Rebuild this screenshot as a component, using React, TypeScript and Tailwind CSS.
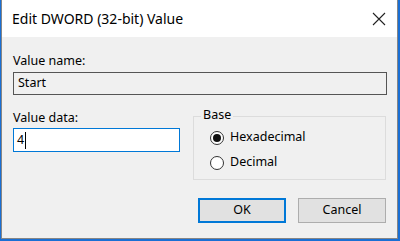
import React from "react";

export default function App() {
  const font = { fontFamily: '"Noto Sans", "Open Sans", sans-serif' };
  return (
    <div className="w-[400px] h-[241px] bg-[#1a6fd4] overflow-hidden" style={font}>
      <div className="ml-[1px] w-[397px] h-[239px] border-l border-r border-b border-[#868686] bg-[#f0f0f0] flex flex-col text-[12px] text-black">
        {/* Title bar */}
        <div className="h-[37px] bg-white flex items-center justify-between pl-[10px] pr-[10px]">
          <span className="text-[14px] leading-none mt-[1px]">Edit DWORD (32-bit) Value</span>
          <svg width="14" height="14" viewBox="0 0 14 14" className="mr-[1px] mt-[1px]">
            <path d="M1 1 L13 13 M13 1 L1 13" stroke="#222" strokeWidth="1.1" fill="none" />
          </svg>
        </div>
        {/* Body */}
        <div className="flex flex-col pl-[11px] pr-[10px]">
          <div className="mt-[16px] h-[16px] leading-[16px] text-[12.5px]">Value name:</div>
          <div className="mt-[3px] h-[23px] w-[374px] border border-[#555] bg-[#f0f0f0] flex items-center pl-[4px] text-[12.5px]">
            Start
          </div>
          <div className="flex mt-[10px]">
            <div className="flex flex-col w-[180px]">
              <div className="mt-[5px] h-[16px] leading-[16px] text-[12.5px]">Value data:</div>
              <div className="mt-[2px] h-[24px] w-[167px] border border-[#0078d7] bg-white flex items-center pl-[3px] text-[12.5px]">
                <span>4</span>
                <span className="inline-block w-[1px] h-[17px] bg-black ml-[1px]" />
              </div>
            </div>
            <div className="relative mt-[11px] w-[193px] h-[64px] border border-[#dcdcdc]">
              <span className="absolute -top-[10px] left-[7px] bg-[#f0f0f0] px-[2px] text-[12.5px] leading-[16px]">Base</span>
              <div className="flex flex-col pl-[16px] pt-[13px] gap-[10px]">
                <label className="flex items-center gap-[6px] h-[15px] text-[12.5px]">
                  <span className="w-[14px] h-[14px] rounded-full border border-[#333] bg-white flex items-center justify-center">
                    <span className="w-[8px] h-[8px] rounded-full bg-[#111]" />
                  </span>
                  Hexadecimal
                </label>
                <label className="flex items-center gap-[6px] h-[15px] text-[12.5px]">
                  <span className="w-[14px] h-[14px] rounded-full border border-[#333] bg-white" />
                  Decimal
                </label>
              </div>
            </div>
          </div>
          <div className="flex justify-end mt-[18px] gap-[12px] mr-[1px]">
            <button className="w-[88px] h-[25px] border-2 border-[#0078d7] bg-[#e1e1e1] text-[12.5px] leading-none">OK</button>
            <button className="w-[88px] h-[25px] border border-[#adadad] bg-[#e1e1e1] text-[12.5px] leading-none">Cancel</button>
          </div>
        </div>
      </div>
    </div>
  );
}
